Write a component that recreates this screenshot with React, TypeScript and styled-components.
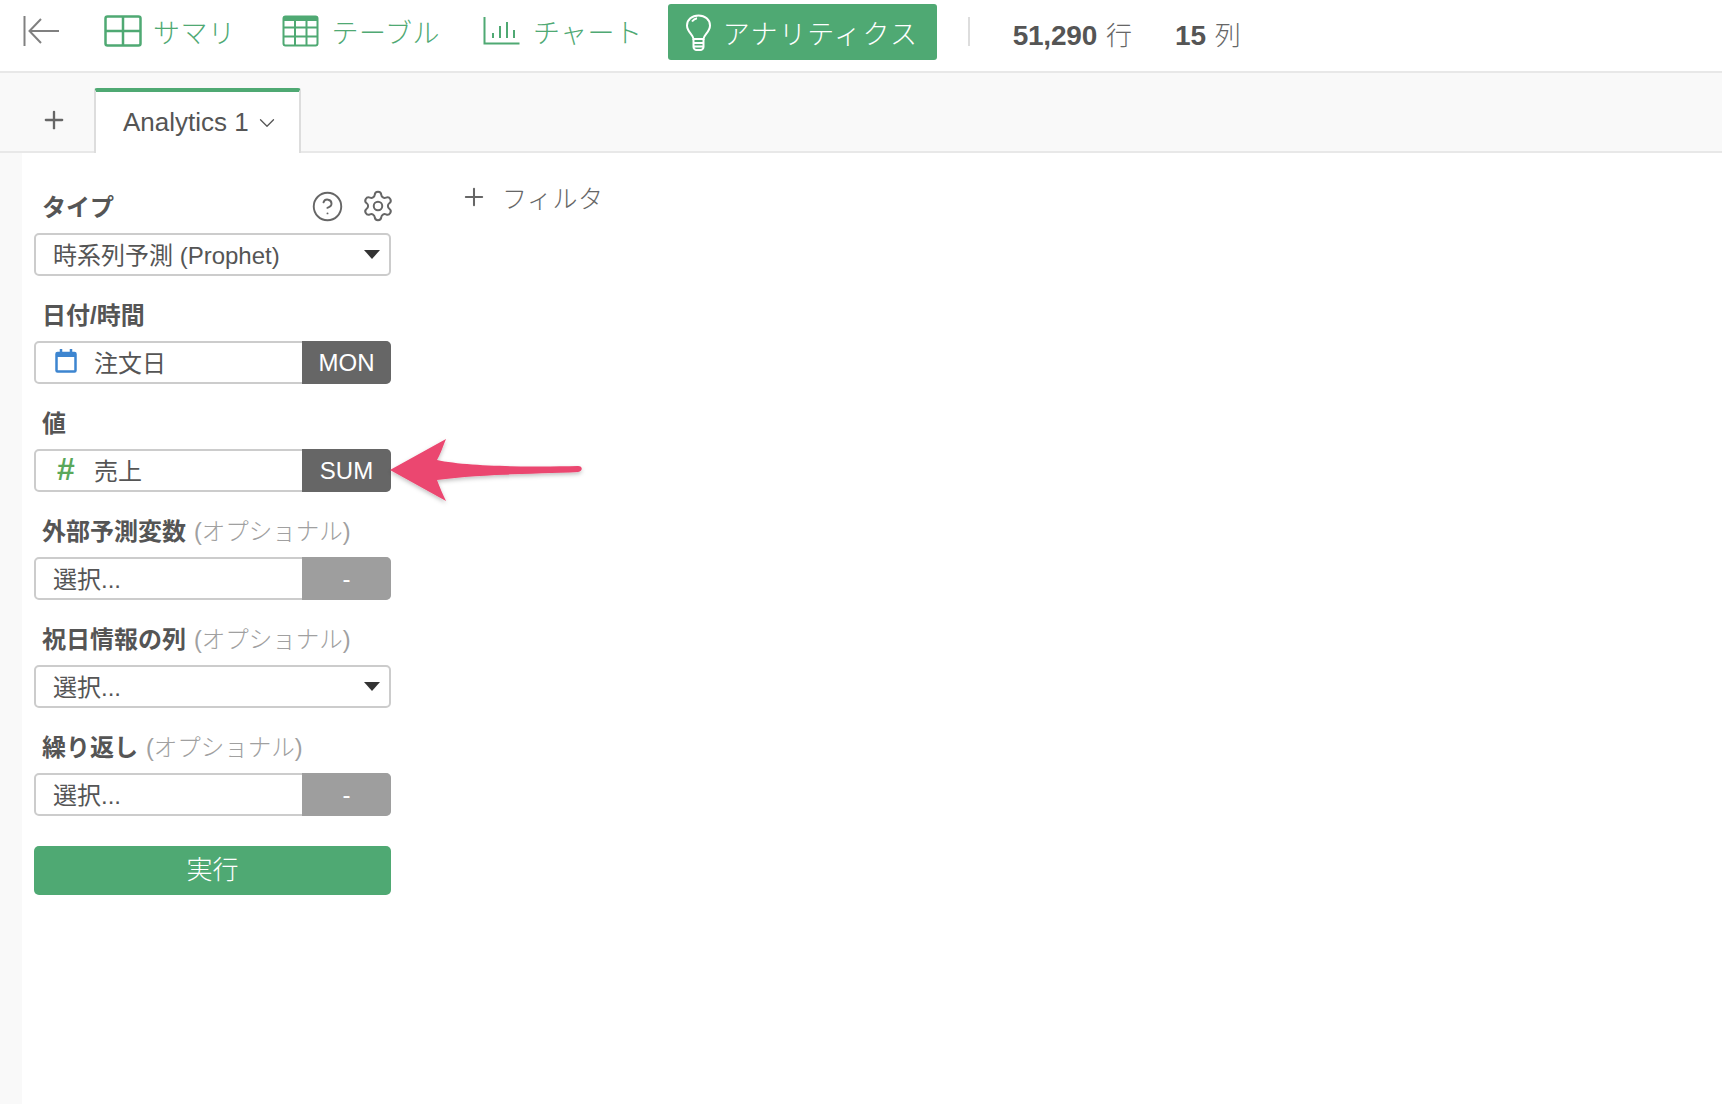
import React from "react";
import styled, { createGlobalStyle } from "styled-components";
import { ChevronDown, CircleHelp, Plus, Settings } from "lucide-react";

const GREEN = "#4fa973";

const GlobalStyle = createGlobalStyle`
  html, body {
    margin: 0;
    padding: 0;
    background: #fff;
    font-family: "Liberation Sans", "Noto Sans CJK JP", sans-serif;
    color: #555;
  }
  * { box-sizing: border-box; }
`;

const Page = styled.div`
  display: flex;
  flex-direction: column;
  height: 1104px;
  overflow: hidden;
`;

const Header = styled.header`
  display: flex;
  align-items: center;
  flex: none;
  height: 73px;
  padding: 0 0 9px 23px;
  border-bottom: 2px solid #e8e8e8;
  background: #fff;
`;

const BackButton = styled.div`
  display: flex;
  width: 36px;
  height: 30px;
  margin-right: 45px;
  color: #808080;
`;

const NavItem = styled.div<{ $gap: number; $after: number }>`
  display: flex;
  align-items: center;
  gap: ${(p) => p.$gap}px;
  margin-right: ${(p) => p.$after}px;
  color: ${GREEN};
  font-size: 27px;
  font-weight: 300;
  letter-spacing: 0.5px;
  white-space: nowrap;
`;

const ActiveItem = styled.div`
  display: flex;
  align-items: center;
  gap: 10px;
  width: 269px;
  height: 56px;
  margin-top: 2px;
  padding-left: 16px;
  border-radius: 3px;
  background: ${GREEN};
  color: #fff;
  font-size: 27px;
  font-weight: 300;
  letter-spacing: 1.4px;
  white-space: nowrap;
`;

const Divider = styled.div`
  width: 2px;
  height: 29px;
  margin: 0 43px 0 31px;
  background: #ddd;
`;

const Stat = styled.div<{ $after?: number }>`
  display: flex;
  align-items: baseline;
  gap: 9px;
  margin: 4px ${(p) => p.$after ?? 0}px 0 0;
  font-size: 26px;
  font-weight: 300;
  color: #666;
  white-space: nowrap;
`;

const StatValue = styled.b`
  font-size: 28px;
  font-weight: 700;
  letter-spacing: -0.2px;
  color: #555;
`;

const TabStrip = styled.div`
  display: flex;
  align-items: flex-end;
  flex: none;
  height: 80px;
  padding-left: 40px;
  border-bottom: 2px solid #e8e8e8;
  background: #f9f9f9;
`;

const AddTab = styled.div`
  display: flex;
  align-self: center;
  margin: 16px 26px 0 0;
  color: #666;
`;

const Tab = styled.div`
  display: flex;
  align-items: center;
  gap: 5px;
  width: 207px;
  height: 65px;
  margin-bottom: -2px;
  padding: 0 0 0 27px;
  border: solid #ddd;
  border-width: 0 2px;
  border-top: 4px solid ${GREEN};
  border-radius: 3px 3px 0 0;
  background: #fff;
  font-size: 26px;
  color: #555;
  white-space: nowrap;
`;

const Body = styled.div`
  display: flex;
  flex: 1;
  background: #f9f9f9;
`;

const Main = styled.main`
  display: flex;
  flex: 1;
  margin-left: 22px;
  background: #fff;
`;

const Panel = styled.section`
  display: flex;
  flex-direction: column;
  flex: none;
  width: 357px;
  margin: 25px 0 0 12px;
`;

const Field = styled.div`
  position: relative;
  display: flex;
  flex-direction: column;
  height: 108px;
`;

const LabelRow = styled.div`
  display: flex;
  align-items: flex-start;
  justify-content: space-between;
  flex: none;
  height: 55px;
  padding: 16px 0 0 8px;
  font-size: 24px;
  line-height: 28px;
  white-space: nowrap;
`;

const LabelText = styled.span`
  font-weight: 700;
  color: #555;
`;

const Optional = styled.span`
  margin-left: 8px;
  font-size: 23.5px;
  font-weight: 300;
  color: #a0a0a0;
`;

const IconGroup = styled.div`
  display: flex;
  align-items: center;
  gap: 17px;
  margin: -5px -4px 0 0;
  color: #666;
`;

const Control = styled.div`
  display: flex;
  align-items: stretch;
  height: 43px;
  border: 2px solid #ccc;
  border-radius: 5px;
  background: #fff;
  font-size: 24px;
  color: #555;
  white-space: nowrap;
`;

const ControlValue = styled.div`
  display: flex;
  flex: 1;
  align-items: center;
  gap: 16px;
  padding: 0 0 3px 17px;
`;

const Caret = styled.div`
  align-self: center;
  width: 0;
  height: 0;
  margin-right: 9px;
  border: solid transparent;
  border-width: 9px 8.5px 0;
  border-top-color: #333;
`;

const Badge = styled.div<{ $muted?: boolean }>`
  display: flex;
  align-items: center;
  justify-content: center;
  width: 89px;
  margin: -2px -2px -2px 0;
  border-radius: 0 5px 5px 0;
  background: ${(p) => (p.$muted ? "#9e9e9e" : "#666")};
  color: #fff;
  font-size: 24px;
`;

const Hash = styled.span`
  width: 25px;
  font-size: 32px;
  font-weight: 700;
  line-height: 1;
  text-align: center;
  color: #5aa85a;
  font-style: italic;
`;

const RunButton = styled.div`
  display: flex;
  align-items: center;
  justify-content: center;
  height: 49px;
  margin-top: 20px;
  padding-bottom: 6px;
  border-radius: 5px;
  background: ${GREEN};
  color: #fff;
  font-size: 26px;
  font-weight: 300;
`;

const FilterBar = styled.div`
  display: flex;
  align-items: center;
  gap: 14px;
  align-self: flex-start;
  margin: 26px 0 0 69px;
  font-size: 25px;
  font-weight: 300;
  letter-spacing: 0.5px;
  color: #666;
`;

const Pointer = styled.svg`
  position: absolute;
  left: 354px;
  top: 45px;
  width: 196px;
  height: 64px;
  overflow: visible;
`;

const SummaryIcon = () => (
  <svg width="38" height="32" viewBox="0 0 38 32" fill="none" stroke={GREEN} strokeWidth="2.5">
    <rect x="1.5" y="1.5" width="35" height="29" rx="2" />
    <path d="M19 1.5v29M1.5 16h35" />
  </svg>
);

const TableIcon = () => (
  <svg width="37" height="32" viewBox="0 0 37 32" fill="none" stroke={GREEN} strokeWidth="2">
    <rect x="1.5" y="1.5" width="34" height="29" rx="2" />
    <path d="M1.5 4h34" strokeWidth="4" />
    <path d="M13 3v27M24.5 3v27M1.5 12.5h34M1.5 21.5h34" />
  </svg>
);

const ChartIcon = () => (
  <svg width="37" height="30" viewBox="0 0 37 30" fill="none" stroke={GREEN} strokeWidth="2">
    <path d="M1.5 1v26.5h35" />
    <path d="M10 22v-5M17 22V10M24 22V6M31 22v-8" />
  </svg>
);

const BulbIcon = () => (
  <svg width="29" height="37" viewBox="0 0 29 37" fill="none" stroke="#fff" strokeWidth="2">
    <path d="M9.500 25c0-4-6.500-7-6.500-13.500C3 5.500 8 1.500 14.500 1.500S26 5.500 26 11.500C26 18 19.500 21 19.500 25z" />
    <path d="M8 7.500c1.500-2 3-3 5-3.300" />
    <path d="M9.500 25v8c0 1.500 1.500 3 3 3h4c1.500 0 3-1.500 3-3v-8M9.500 29h10M9.500 32.500h10" />
  </svg>
);

const BackIcon = () => (
  <svg width="36" height="30" viewBox="0 0 36 30" fill="none" stroke="currentColor" strokeWidth="2">
    <path d="M1.500 0v30" />
    <path d="M36 15H7M18 3 6.500 15 18 27" />
  </svg>
);

const CalendarIcon = () => (
  <svg width="25" height="24" viewBox="0 0 25 24" fill="none" stroke="#3d85d0" strokeWidth="2.500">
    <rect x="3.500" y="4" width="19" height="18.500" rx="1" />
    <path d="M3.500 6h19" strokeWidth="4" />
    <path d="M8 0v4M18 0v4" />
  </svg>
);

const ArrowPointer = () => (
  <Pointer viewBox="0 0 196 64">
    <defs>
      <filter id="pointer-shadow" x="-10%" y="-20%" width="120%" height="150%">
        <feDropShadow dx="0" dy="2" stdDeviation="2" floodColor="#000" floodOpacity="0.25" />
      </filter>
    </defs>
    <path
      d="M2 31 58 0 C54 10 52 16 49 21 C80 28 150 28 190 27 C195 27 195 32 190 33 C150 35 90 35 49 41 C52 49 55 56 58 62 Z"
      fill="#eb4770"
      filter="url(#pointer-shadow)"
    />
  </Pointer>
);

export default function App() {
  return (
    <Page>
      <GlobalStyle />
      <Header>
        <BackButton>
          <BackIcon />
        </BackButton>
        <NavItem $gap={11} $after={46}>
          <SummaryIcon />
          サマリ
        </NavItem>
        <NavItem $gap={13} $after={43}>
          <TableIcon />
          テーブル
        </NavItem>
        <NavItem $gap={13} $after={25}>
          <ChartIcon />
          チャート
        </NavItem>
        <ActiveItem>
          <BulbIcon />
          アナリティクス
        </ActiveItem>
        <Divider />
        <Stat $after={43}>
          <StatValue>51,290</StatValue>行
        </Stat>
        <Stat>
          <StatValue>15</StatValue>列
        </Stat>
      </Header>
      <TabStrip>
        <AddTab>
          <Plus size={28} strokeWidth={2} />
        </AddTab>
        <Tab>
          Analytics 1
          <ChevronDown size={26} strokeWidth={1.2} />
        </Tab>
      </TabStrip>
      <Body>
        <Main>
          <Panel>
            <Field>
              <LabelRow>
                <LabelText>タイプ</LabelText>
                <IconGroup>
                  <CircleHelp size={33} strokeWidth={1.4} />
                  <Settings size={34} strokeWidth={1.4} />
                </IconGroup>
              </LabelRow>
              <Control>
                <ControlValue>時系列予測 (Prophet)</ControlValue>
                <Caret />
              </Control>
            </Field>
            <Field>
              <LabelRow>
                <LabelText>日付/時間</LabelText>
              </LabelRow>
              <Control>
                <ControlValue>
                  <CalendarIcon />
                  注文日
                </ControlValue>
                <Badge>MON</Badge>
              </Control>
            </Field>
            <Field>
              <LabelRow>
                <LabelText>値</LabelText>
              </LabelRow>
              <Control>
                <ControlValue>
                  <Hash>#</Hash>
                  売上
                </ControlValue>
                <Badge>SUM</Badge>
              </Control>
              <ArrowPointer />
            </Field>
            <Field>
              <LabelRow>
                <span>
                  <LabelText>外部予測変数</LabelText>
                  <Optional>(オプショナル)</Optional>
                </span>
              </LabelRow>
              <Control>
                <ControlValue>選択...</ControlValue>
                <Badge $muted>-</Badge>
              </Control>
            </Field>
            <Field>
              <LabelRow>
                <span>
                  <LabelText>祝日情報の列</LabelText>
                  <Optional>(オプショナル)</Optional>
                </span>
              </LabelRow>
              <Control>
                <ControlValue>選択...</ControlValue>
                <Caret />
              </Control>
            </Field>
            <Field>
              <LabelRow>
                <span>
                  <LabelText>繰り返し</LabelText>
                  <Optional>(オプショナル)</Optional>
                </span>
              </LabelRow>
              <Control>
                <ControlValue>選択...</ControlValue>
                <Badge $muted>-</Badge>
              </Control>
            </Field>
            <RunButton>実行</RunButton>
          </Panel>
          <FilterBar>
            <Plus size={28} strokeWidth={1.75} />
            フィルタ
          </FilterBar>
        </Main>
      </Body>
    </Page>
  );
}
